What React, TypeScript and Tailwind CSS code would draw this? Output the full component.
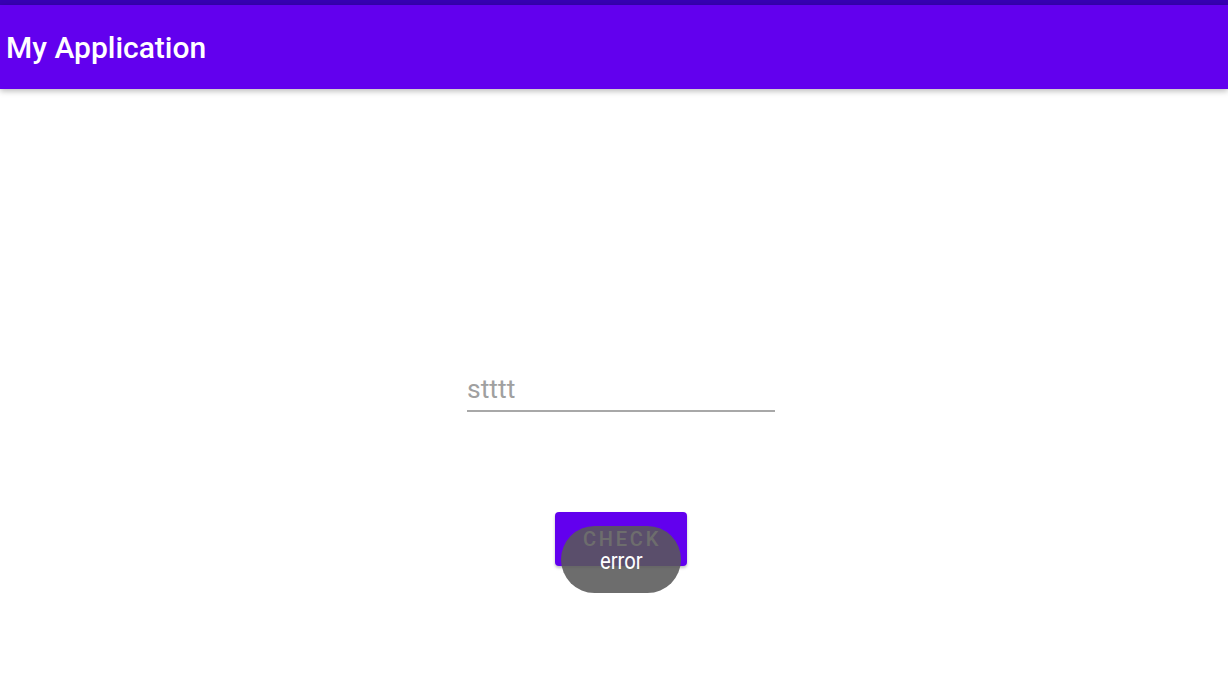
export default function App() {
  return (
    <div className="flex h-[682px] w-full flex-col overflow-hidden bg-white font-['Roboto',sans-serif]">
      <div className="h-[5px] bg-[#3700B3]" />
      <header className="relative z-10 flex h-[84px] items-center bg-[#6200EE] px-[6px] pt-[2px] shadow-[0_2px_6px_rgba(0,0,0,0.28)]">
        <h1 className="text-[30px] font-medium leading-none text-white">My Application</h1>
      </header>
      <main className="relative flex flex-1 flex-col items-center pl-[14px] pt-[285px]">
        <div className="w-[308px] border-b-2 border-[#a8a8a8] pb-[6px]">
          <span className="block text-[26.5px] leading-[30px] text-[#a0a0a0]">stttt</span>
        </div>
        <button className="mt-[100px] flex h-[54px] w-[132px] items-center justify-center rounded-[4px] bg-[#6200EE] pl-[2px] text-[20px] font-medium tracking-[0.14em] text-white shadow-[0_2px_3px_rgba(0,0,0,0.25)]">
          CHECK
        </button>
        {/* toast overlays the button */}
        <div className="absolute left-[561px] top-[437px] flex h-[67px] w-[120px] items-center justify-center rounded-full bg-[rgba(89,89,89,0.88)] pt-[4px]">
          <span className="scale-x-[0.88] text-[23px] leading-none text-white">error</span>
        </div>
      </main>
    </div>
  );
}
